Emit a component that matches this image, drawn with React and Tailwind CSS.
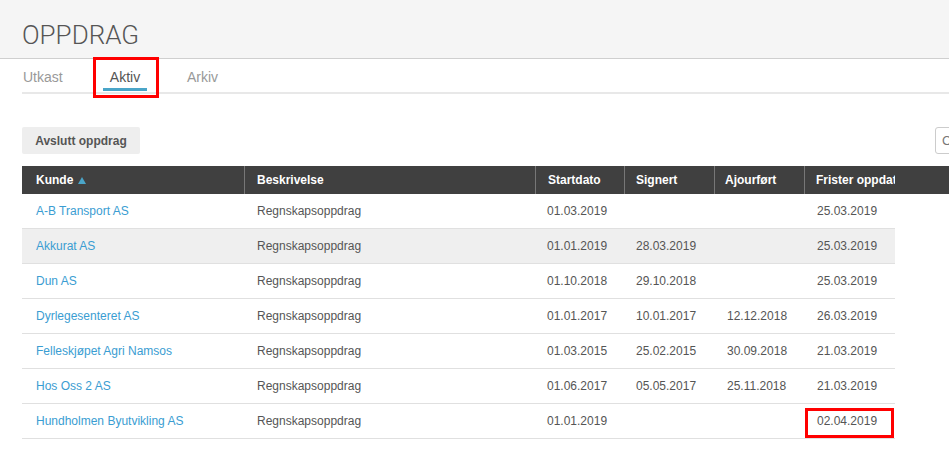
import React from 'react';

const rows = [
  { kunde: 'A-B Transport AS', start: '01.03.2019', signert: '', ajour: '', frist: '25.03.2019' },
  { kunde: 'Akkurat AS', start: '01.01.2019', signert: '28.03.2019', ajour: '', frist: '25.03.2019', hover: true },
  { kunde: 'Dun AS', start: '01.10.2018', signert: '29.10.2018', ajour: '', frist: '25.03.2019' },
  { kunde: 'Dyrlegesenteret AS', start: '01.01.2017', signert: '10.01.2017', ajour: '12.12.2018', frist: '26.03.2019' },
  { kunde: 'Felleskjøpet Agri Namsos', start: '01.03.2015', signert: '25.02.2015', ajour: '30.09.2018', frist: '21.03.2019' },
  { kunde: 'Hos Oss 2 AS', start: '01.06.2017', signert: '05.05.2017', ajour: '25.11.2018', frist: '21.03.2019' },
  { kunde: 'Hundholmen Byutvikling AS', start: '01.01.2019', signert: '', ajour: '', frist: '02.04.2019', mark: true },
];

const App = () => {
  return (
    <div className="relative w-full h-[473px] overflow-hidden bg-white font-['Liberation_Sans',Arial,sans-serif] text-[#555]">
      <div className="h-[59px] bg-[#f5f5f5] border-b border-[#cfcfcf] px-[22px] pt-[18px]">
        <h1 className="font-['Roboto',sans-serif] font-light text-[26px] leading-[34px] text-[#555]">OPPDRAG</h1>
      </div>

      <div className="w-[1137px] px-[22px]">
        <div className="flex h-[35px] border-b-2 border-[#e8e8e8] text-[14px]">
          <div className="w-[81px] pt-[8px] pl-[1px] text-[#999]">Utkast</div>
          <div className="relative w-[44px] pt-[8px] text-[#555] text-center">
            Aktiv
            <div className="absolute left-0 right-0 bottom-[1px] h-[3px] bg-[#4aa5c8]"></div>
          </div>
          <div className="pt-[8px] ml-[40px] text-[#999]">Arkiv</div>
        </div>

        <div className="flex justify-between items-center mt-[33px]">
          <button className="h-[27px] w-[118px] rounded-[2px] bg-[#eeeeee] text-[12px] font-bold text-[#555]">Avslutt oppdrag</button>
          <input className="h-[27px] w-[180px] rounded-[3px] border border-[#cccccc] px-[6px] text-[13px] placeholder-[#777]" placeholder="Christ" />
        </div>

        <div className="mt-[12px] text-[12px]">
          <div className="flex h-[28px] bg-[#404040] text-white font-bold items-center">
            <div className="w-[223px] pl-[14px] h-full flex items-center border-r border-[#777]">
              Kunde
              <svg className="ml-[5px]" width="8" height="7" viewBox="0 0 8 7"><path d="M4 0 L8 7 L0 7 Z" fill="#4aa5c8" /></svg>
            </div>
            <div className="w-[291px] pl-[12px] h-full flex items-center border-r border-[#777]">Beskrivelse</div>
            <div className="w-[89px] pl-[12px] h-full flex items-center border-r border-[#777]">Startdato</div>
            <div className="w-[90px] pl-[11px] h-full flex items-center border-r border-[#777]">Signert</div>
            <div className="w-[90px] pl-[10px] h-full flex items-center border-r border-[#777]">Ajourført</div>
            <div className="w-[90px] pl-[11px] h-full flex items-center overflow-hidden whitespace-nowrap">Frister oppdat</div>
          </div>
          {rows.map((r) => (
            <div key={r.kunde} className={`flex w-[873px] h-[35px] items-center border-b border-[#e0e0e0] ${r.hover ? 'bg-[#efefef]' : ''}`}>
              <div className="w-[223px] pl-[14px] text-[#3a9dd2]">{r.kunde}</div>
              <div className="w-[291px] pl-[12px]">Regnskapsoppdrag</div>
              <div className="w-[89px] pl-[11px]">{r.start}</div>
              <div className="w-[90px] pl-[11px]">{r.signert}</div>
              <div className="w-[90px] pl-[12px]">{r.ajour}</div>
              <div className="relative w-[90px] pl-[12px] h-full flex items-center">
                {r.frist}
                {r.mark && <div className="absolute left-0 right-[1px] top-[4px] bottom-0 border-[3px] border-[#ff0000]"></div>}
              </div>
            </div>
          ))}
        </div>
      </div>

      <div className="absolute left-[93px] top-[57px] w-[66px] h-[41px] border-[3px] border-[#ff0000]"></div>
    </div>
  );
};

export default App;
